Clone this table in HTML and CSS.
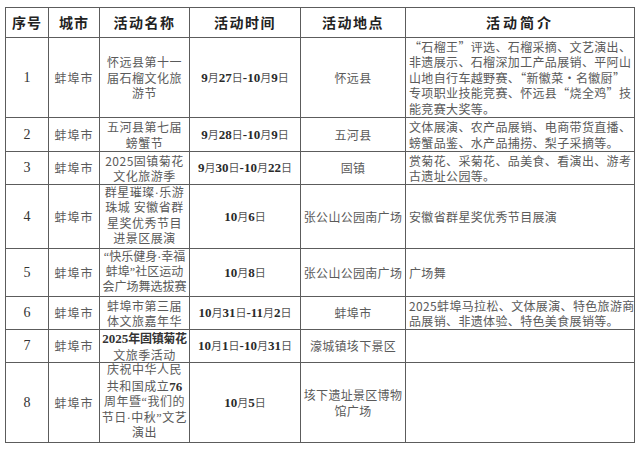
FILE: index.html
```html
<!DOCTYPE html>
<html lang="zh-CN">
<head>
<meta charset="utf-8">
<link rel="stylesheet" href="styles.css">
</head>
<body>
<table class="sched">
  <colgroup>
    <col class="c-no"><col class="c-city"><col class="c-name"><col class="c-time"><col class="c-place"><col class="c-desc">
  </colgroup>
  <thead>
    <tr class="r-head">
      <th class="h-tight">序号</th>
      <th class="h-tight">城市</th>
      <th>活动名称</th>
      <th>活动时间</th>
      <th>活动地点</th>
      <th class="h-wide">活动简介</th>
    </tr>
  </thead>
  <tbody>
    <tr class="r-80">
      <td class="no">1</td>
      <td class="city">蚌埠市</td>
      <td class="name">怀远县第十一<br>届石榴文化旅<br>游节</td>
      <td class="time">9<i>月</i>27<i>日</i>-10<i>月</i>9<i>日</i></td>
      <td class="place">怀远县</td>
      <td class="desc">“石榴王”评选、石榴采摘、文艺演出、<br>非遗展示、石榴深加工产品展销、平阿山<br>山地自行车越野赛、“新徽菜·名徽厨”<br>专项职业技能竞赛、怀远县“烧全鸡”技<br>能竞赛大奖等。</td>
    </tr>
    <tr class="r-34">
      <td class="no">2</td>
      <td class="city">蚌埠市</td>
      <td class="name">五河县第七届<br>螃蟹节</td>
      <td class="time">9<i>月</i>28<i>日</i>-10<i>月</i>9<i>日</i></td>
      <td class="place">五河县</td>
      <td class="desc">文体展演、农产品展销、电商带货直播、<br>螃蟹品鉴、水产品捕捞、梨子采摘等。</td>
    </tr>
    <tr class="r-33">
      <td class="no">3</td>
      <td class="city">蚌埠市</td>
      <td class="name">2025固镇菊花<br>文化旅游季</td>
      <td class="time">9<i>月</i>30<i>日</i>-10<i>月</i>22<i>日</i></td>
      <td class="place">固镇</td>
      <td class="desc">赏菊花、采菊花、品美食、看演出、游考<br>古遗址公园等。</td>
    </tr>
    <tr class="r-64">
      <td class="no">4</td>
      <td class="city">蚌埠市</td>
      <td class="name lat">群星璀璨·乐游<br>珠城 安徽省群<br>星奖优秀节目<br>进景区展演</td>
      <td class="time">10<i>月</i>6<i>日</i></td>
      <td class="place">张公山公园南广场</td>
      <td class="desc">安徽省群星奖优秀节目展演</td>
    </tr>
    <tr class="r-48">
      <td class="no">5</td>
      <td class="city">蚌埠市</td>
      <td class="name lat name-tight">“快乐健身·幸福<br>蚌埠”社区运动<br>会广场舞选拔赛</td>
      <td class="time">10<i>月</i>8<i>日</i></td>
      <td class="place">张公山公园南广场</td>
      <td class="desc">广场舞</td>
    </tr>
    <tr class="r-33">
      <td class="no">6</td>
      <td class="city">蚌埠市</td>
      <td class="name">蚌埠市第三届<br>体文旅嘉年华</td>
      <td class="time">10<i>月</i>31<i>日</i>-11<i>月</i>2<i>日</i></td>
      <td class="place">蚌埠市</td>
      <td class="desc">2025蚌埠马拉松、文体展演、特色旅游商<br>品展销、非遗体验、特色美食展销等。</td>
    </tr>
    <tr class="r-33">
      <td class="no">7</td>
      <td class="city">蚌埠市</td>
      <td class="name"><span class="strong"><span class="num">2025</span>年固镇菊花</span><br>文旅季活动</td>
      <td class="time">10<i>月</i>1<i>日</i>-10<i>月</i>31<i>日</i></td>
      <td class="place">濠城镇垓下景区</td>
      <td class="desc"></td>
    </tr>
    <tr class="r-80">
      <td class="no">8</td>
      <td class="city">蚌埠市</td>
      <td class="name lat">庆祝中华人民<br>共和国成立<span class="num">76</span><br>周年暨“我们的<br>节日·中秋”文艺<br>演出</td>
      <td class="time">10<i>月</i>5<i>日</i></td>
      <td class="place">垓下遗址景区博物<br>馆广场</td>
      <td class="desc"></td>
    </tr>
  </tbody>
</table>
</body>
</html>
```

FILE: styles.css
```css
html, body {
  margin: 0;
  padding: 0;
  background: #fff;
}
body {
  padding: 7px 0 0 5px;
  font-family: "Noto Sans CJK SC", "Liberation Sans", sans-serif;
  color: #5a5a5a;
}
.sched {
  border-collapse: collapse;
  table-layout: fixed;
  width: 629px;
  font-size: 12px;
  line-height: 15.5px;
}
.c-no { width: 43px; }
.c-city { width: 51px; }
.c-name { width: 90px; }
.c-time { width: 111px; }
.c-place { width: 105px; }
.c-desc { width: 229px; }

.sched th, .sched td {
  border: 1px solid #5c5c5c;
  padding: 0;
  vertical-align: middle;
  text-align: center;
  white-space: nowrap;
  overflow: hidden;
}
.sched th {
  font-size: 14px;
  font-weight: 700;
  color: #222;
  letter-spacing: 1.5px;
  height: 29px;
}
.sched th.h-tight { letter-spacing: 1px; }
.sched th.h-wide { letter-spacing: 3px; }

.r-80 td { height: 79px; }
.r-34 td { height: 33px; }
.r-33 td { height: 32px; }
.r-64 td { height: 63px; }
.r-48 td { height: 47px; line-height: 15px; }

.no {
  font-family: "Liberation Serif", "Noto Sans CJK SC", serif;
  font-size: 14px;
  color: #333;
}
.city {
  letter-spacing: 1px;
}
.name {
  letter-spacing: 0.5px;
}
.name.lat {
  font-family: "Liberation Serif", "Noto Sans CJK SC", serif;
}
.name-tight { letter-spacing: 0; }
.strong { color: #333; font-weight: 600; letter-spacing: -0.3px; }
.num {
  font-family: "Liberation Serif", serif;
  font-weight: 700;
  font-size: 13px;
  color: #333;
  letter-spacing: 0;
}
.time {
  font-family: "Liberation Serif", "Noto Sans CJK SC", serif;
  font-size: 13px;
  font-weight: 700;
  color: #2a2a2a;
}
.time i {
  font-style: normal;
  font-weight: 400;
  font-size: 11px;
  color: #555;
  font-family: "Noto Sans CJK SC", sans-serif;
}
.place {
  letter-spacing: 0.3px;
}
.sched td.desc {
  text-align: left;
  padding: 0 2px 0 3px;
  letter-spacing: 0.35px;
}
```
